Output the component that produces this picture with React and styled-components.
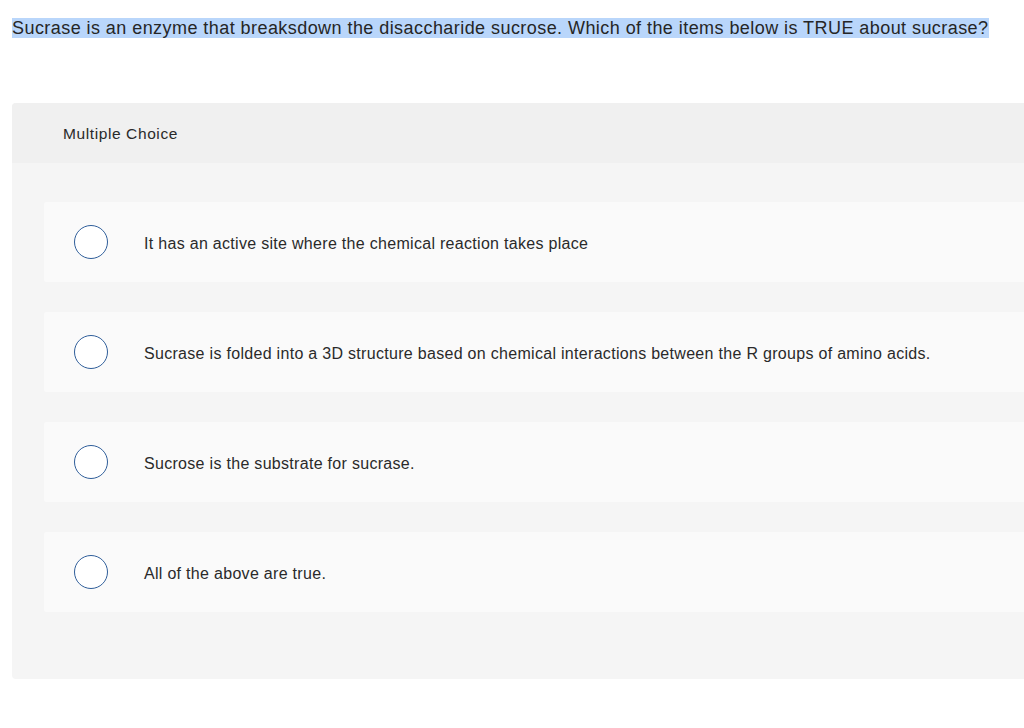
import React from 'react'
import styled, {createGlobalStyle} from 'styled-components'

// -------------------------------------------------------------
// Data.
// -------------------------------------------------------------

const CHOICES = [
  'It has an active site where the chemical reaction takes place',
  'Sucrase is folded into a 3D structure based on chemical interactions between the R groups of amino acids.',
  'Sucrose is the substrate for sucrase.',
  'All of the above are true.',
]

// -------------------------------------------------------------
// Global.
// -------------------------------------------------------------

const GlobalStyle = createGlobalStyle`
  html, body {
    margin: 0;
    padding: 0;
    background: #ffffff;
    overflow: hidden;
  }

  body {
    font-family: 'Liberation Sans', Arial, sans-serif;
    color: #2a2a2a;
  }
`

const Page = styled.div`
  padding: 17px 0 0 12px;
`

// -------------------------------------------------------------
// Question.
// -------------------------------------------------------------

const Question = styled.p`
  margin: 0;
  display: inline;
  font-size: 18px;
  line-height: 23px;
  letter-spacing: 0.44px;
  background: #b9d6fb;
  color: #262626;
`

const QuestionLine = styled.div`
  height: 23px;
  margin-bottom: 63px;
`

// -------------------------------------------------------------
// Panel.
// -------------------------------------------------------------

const Panel = styled.section`
  width: 1030px;
  border-radius: 4px;
  overflow: hidden;
  background: #f5f5f5;
`

const PanelHeader = styled.header`
  display: flex;
  align-items: center;
  box-sizing: border-box;
  height: 60px;
  padding: 2px 0 0 51px;
  background: #f0f0f0;
  font-size: 15.5px;
  letter-spacing: 0.6px;
  color: #2a2a2a;
`

const ChoiceList = styled.ul`
  list-style: none;
  margin: 0;
  padding: 39px 0 67px 32px;
  display: flex;
  flex-direction: column;
  gap: 30px;
`

const Choice = styled.li`
  display: flex;
  align-items: center;
  height: 80px;
  padding-left: 30px;
  background: #fafafa;
  border-radius: 2px;
  font-size: 16px;
  letter-spacing: 0.3px;
  color: #2a2a2a;
`

const ChoiceText = styled.span`
  padding-top: 3px;
`

const Radio = styled.span`
  flex: none;
  box-sizing: border-box;
  width: 34px;
  height: 34px;
  border: 1.5px solid #2f5e9a;
  border-radius: 50%;
  background: #ffffff;
  margin-right: 36px;
`

// -------------------------------------------------------------
// Export.
// -------------------------------------------------------------

export default function App() {
  return (
    <Page>
      <GlobalStyle />
      <QuestionLine>
        <Question>
          Sucrase is an enzyme that breaksdown the disaccharide sucrose. Which of the items below is TRUE about sucrase?
        </Question>
      </QuestionLine>
      <Panel>
        <PanelHeader>Multiple Choice</PanelHeader>
        <ChoiceList>
          {CHOICES.map(text => (
            <Choice key={text}>
              <Radio />
              <ChoiceText>{text}</ChoiceText>
            </Choice>
          ))}
        </ChoiceList>
      </Panel>
    </Page>
  )
}
